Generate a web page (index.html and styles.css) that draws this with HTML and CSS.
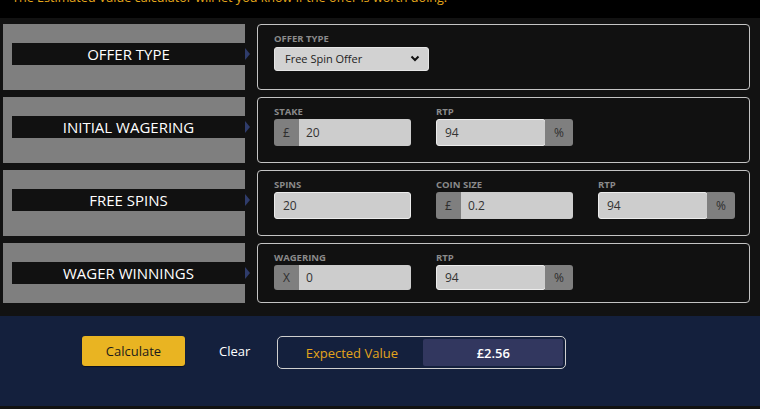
FILE: index.html
```html
<!DOCTYPE html>
<html lang="en">
<head>
  <meta charset="UTF-8">
  <meta name="viewport" content="width=device-width, initial-scale=1.0">
  <title>Estimated Value Calculator</title>
  <link rel="stylesheet" href="styles.css">
</head>
<body>
  <header class="intro">
    <p>The Estimated Value calculator will let you know if the offer is worth doing.</p>
  </header>

  <main class="calc">
    <!-- Offer type -->
    <section class="row">
      <div class="row-title"><h2>OFFER TYPE</h2></div>
      <div class="row-fields">
        <div class="field">
          <label for="offerType">OFFER TYPE</label>
          <div class="select-wrap">
            <select id="offerType">
              <option>Free Spin Offer</option>
              <option>Deposit Bonus</option>
            </select>
            <svg class="chevron" width="10" height="7" viewBox="0 0 10 7"><path d="M1.5 1.5 L5 5 L8.5 1.5" fill="none" stroke="#111" stroke-width="2"/></svg>
          </div>
        </div>
      </div>
    </section>

    <!-- Initial wagering -->
    <section class="row">
      <div class="row-title"><h2>INITIAL WAGERING</h2></div>
      <div class="row-fields">
        <div class="field">
          <label for="stake">STAKE</label>
          <div class="input-group">
            <span class="addon">£</span>
            <input id="stake" type="text" value="20">
          </div>
        </div>
        <div class="field">
          <label for="rtp1">RTP</label>
          <div class="input-group">
            <input id="rtp1" class="lit" type="text" value="94">
            <span class="addon addon-end">%</span>
          </div>
        </div>
      </div>
    </section>

    <!-- Free spins -->
    <section class="row">
      <div class="row-title"><h2>FREE SPINS</h2></div>
      <div class="row-fields">
        <div class="field">
          <label for="spins">SPINS</label>
          <div class="input-group">
            <input id="spins" class="lit" type="text" value="20">
          </div>
        </div>
        <div class="field">
          <label for="coin">COIN SIZE</label>
          <div class="input-group">
            <span class="addon">£</span>
            <input id="coin" type="text" value="0.2">
          </div>
        </div>
        <div class="field">
          <label for="rtp2">RTP</label>
          <div class="input-group">
            <input id="rtp2" class="lit" type="text" value="94">
            <span class="addon addon-end">%</span>
          </div>
        </div>
      </div>
    </section>

    <!-- Wager winnings -->
    <section class="row row-short">
      <div class="row-title"><h2>WAGER WINNINGS</h2></div>
      <div class="row-fields">
        <div class="field">
          <label for="wagering">WAGERING</label>
          <div class="input-group small">
            <span class="addon">X</span>
            <input id="wagering" type="text" value="0">
          </div>
        </div>
        <div class="field">
          <label for="rtp3">RTP</label>
          <div class="input-group small">
            <input id="rtp3" class="lit" type="text" value="94">
            <span class="addon addon-end">%</span>
          </div>
        </div>
      </div>
    </section>
  </main>

  <footer class="result-bar">
    <button class="calc-btn">Calculate</button>
    <button class="clear-btn">Clear</button>
    <div class="result">
      <span class="result-label">Expected Value</span>
      <span class="result-value">£2.56</span>
    </div>
  </footer>
</body>
</html>
```

FILE: styles.css
```css
body {
  font-family: 'Open Sans', 'Noto Sans', sans-serif;
  margin: 0;
  padding: 0;
  background-color: #121212;
  width: 760px;
  height: 409px;
  overflow: hidden;
}

.intro {
  background-color: #000;
  height: 18px;
  overflow: hidden;
}

.intro p {
  margin: -10px 0 0 12px;
  font-size: 12.6px;
  line-height: 16px;
  color: #e6a81c;
}

.calc {
  padding: 6px 10px 13px 3px;
  display: flex;
  flex-direction: column;
  gap: 7px;
}

.row {
  display: flex;
  gap: 12px;
  height: 66px;
}

.row-short {
  height: 60px;
}

.row-title {
  width: 242px;
  flex: none;
  background-color: #7f7f7f;
  padding-top: 19px;
  box-sizing: border-box;
}

.row-title h2 {
  position: relative;
  margin: 0 0 0 9px;
  height: 22px;
  background-color: #111;
  color: #fff;
  font-size: 15px;
  font-weight: 500;
  line-height: 22px;
  text-align: center;
}

/* little pointer into the field box */
.row-title h2::after {
  content: "";
  position: absolute;
  right: -5px;
  top: 5px;
  border-top: 6px solid transparent;
  border-bottom: 6px solid transparent;
  border-left: 5px solid #2f3c6b;
}

.row-fields {
  flex: 1;
  display: flex;
  gap: 25px;
  border: 1px solid #c4c4c4;
  border-radius: 4px;
  background-color: #111;
  padding: 8px 0 0 16px;
}

.field {
  flex: none;
}

.field label {
  display: block;
  font-size: 9.5px;
  font-weight: 700;
  color: #8a8a8a;
  line-height: 12px;
  margin-bottom: 1px;
}

.select-wrap {
  position: relative;
  width: 155px;
}

.select-wrap select {
  appearance: none;
  -webkit-appearance: none;
  width: 155px;
  height: 24px;
  border: 1px solid #e6e6e6;
  border-radius: 3px;
  background-color: #d2d2d2;
  font-family: inherit;
  font-size: 11px;
  color: #222;
  padding: 0 0 0 10px;
}

.chevron {
  position: absolute;
  right: 9px;
  top: 9px;
}

.input-group {
  display: flex;
  width: 137px;
  height: 27px;
}

.input-group.small {
  height: 25px;
}

.addon {
  width: 25px;
  flex: none;
  background-color: #7f7f7f;
  color: #2e2e2e;
  font-size: 12px;
  display: flex;
  align-items: center;
  justify-content: center;
  border-radius: 3px 0 0 3px;
}

.addon-end {
  width: 28px;
  border-radius: 0 3px 3px 0;
}

.input-group input {
  flex: 1;
  min-width: 0;
  border: none;
  background-color: #cdcdcd;
  font-family: inherit;
  font-size: 12px;
  color: #333;
  padding: 0 0 0 7px;
  border-radius: 0 3px 3px 0;
}

.input-group input.lit {
  border: 1px solid #ececec;
  border-radius: 3px;
  padding-left: 8px;
}

.input-group input.lit + .addon-end {
  margin-left: -1px;
}

.result-bar {
  background-color: #14203d;
  height: 90px;
  box-sizing: border-box;
  padding: 20px 0 0 82px;
  display: flex;
  align-items: flex-start;
}

.calc-btn {
  width: 103px;
  height: 30px;
  border: none;
  border-radius: 3px;
  background-color: #e9b422;
  color: #1b1b1b;
  font-family: inherit;
  font-size: 13px;
  box-shadow: 0 1px 1px rgba(0, 0, 0, 0.5);
}

.clear-btn {
  margin-left: 34px;
  height: 30px;
  border: none;
  padding: 0;
  background: none;
  color: #fff;
  font-family: inherit;
  font-size: 13px;
}

.result {
  margin-left: 27px;
  width: 289px;
  height: 33px;
  box-sizing: border-box;
  border: 1.5px solid #cfcfcf;
  border-radius: 5px;
  padding: 2px;
  display: flex;
}

.result-label {
  width: 143px;
  color: #e3a41b;
  font-size: 13px;
  display: flex;
  align-items: center;
  justify-content: center;
}

.result-value {
  flex: 1;
  background-color: #32375f;
  border-radius: 2px;
  color: #fff;
  font-size: 13px;
  font-weight: 600;
  display: flex;
  align-items: center;
  justify-content: center;
}
```
